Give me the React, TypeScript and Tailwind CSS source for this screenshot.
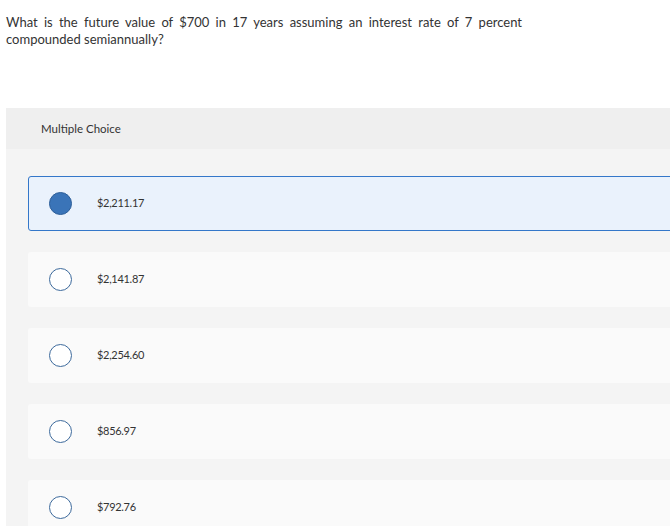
import React from "react";

const options = ["$2,211.17", "$2,141.87", "$2,254.60", "$856.97", "$792.76"];

export default function App() {
  return (
    <div
      className="w-[670px] h-[526px] overflow-hidden bg-white text-[#333333]"
      style={{ fontFamily: "Lato, 'Open Sans', sans-serif" }}
    >
      <p className="ml-[6px] pt-[14px] w-[516px] text-[13px] leading-[17px] text-justify text-[#333]">
        What is the future value of $700 in 17 years assuming an interest rate of 7 percent compounded semiannually?
      </p>
      <div className="ml-[6px] mt-[60px] w-[700px]">
        <div className="h-[41px] bg-[#efefef] flex items-center pl-[35px] text-[11.5px] text-[#333]">
          Multiple Choice
        </div>
        <div className="bg-[#f4f4f4] pt-[27px] pl-[22px] flex flex-col gap-[21px] pb-[20px]">
          {options.map((o, i) => (
            <div
              key={o}
              className={
                i === 0
                  ? "h-[55px] rounded-[3px] border border-[#3477c9] bg-[#eaf2fc] flex items-center"
                  : "h-[55px] rounded-[3px] bg-[#fafafa] flex items-center"
              }
            >
              <div
                className={
                  i === 0
                    ? "ml-[20px] w-[23px] h-[23px] rounded-full bg-[#3a74b8] border border-[#2e5f99]"
                    : "ml-[21px] w-[23px] h-[23px] rounded-full bg-white border-[1.5px] border-[#3d6a9c]"
                }
              />
              <span className="ml-[25px] text-[11px] tracking-[-0.3px] text-[#333]">{o}</span>
            </div>
          ))}
        </div>
      </div>
    </div>
  );
}
